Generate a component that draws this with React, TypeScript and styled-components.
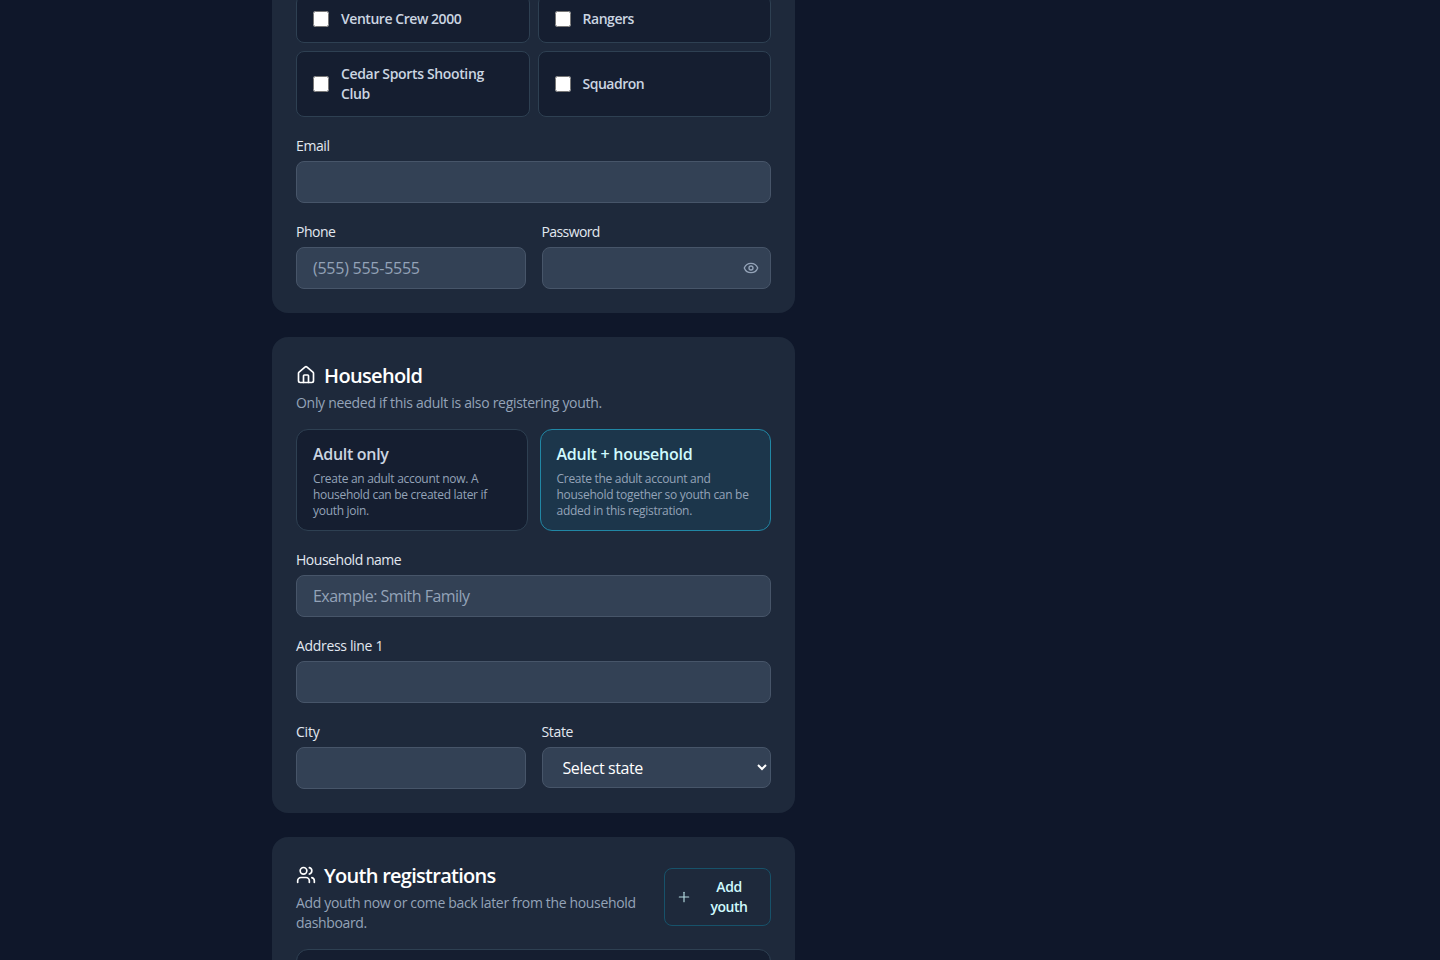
import React from "react";
import styled, { createGlobalStyle } from "styled-components";
import { Eye, House, Plus, Users } from "lucide-react";

const GlobalStyle = createGlobalStyle`
  *, *::before, *::after { box-sizing: border-box; }
  html, body { margin: 0; background: #0f172a; }
  body, input, select, button {
    font-family: "Segoe UI", "Open Sans", "Noto Sans", sans-serif;
  }
`;

const Page = styled.main`
  height: 960px;
  overflow: hidden;
  padding-left: 272px;
  background: #0f172a;
  color: #fff;
`;

const Column = styled.form`
  display: flex;
  flex-direction: column;
  gap: 24px;
  width: 523px;
  margin-top: -29px;
`;

const Card = styled.section`
  padding: 24px;
  border-radius: 16px;
  background: #1e293b;
`;

const Grid = styled.div<{ $gap: number }>`
  display: grid;
  grid-template-columns: repeat(2, minmax(0, 1fr));
  align-items: stretch;
  gap: ${(p) => p.$gap}px;
`;

const Text = styled.span<{ $track?: number }>`
  letter-spacing: ${(p) => p.$track ?? 0}px;
  white-space: pre-line;
`;

const UnitOption = styled.label`
  display: flex;
  align-items: center;
  gap: 12px;
  min-height: 48px;
  padding: 12px 16px;
  border: 1px solid #2e4052;
  border-radius: 8px;
  background: #151e30;
  color: #cbd5e1;
  font-size: 14px;
  font-weight: 600;
  line-height: 20px;
`;

const Checkbox = styled.input`
  flex: none;
  width: 16px;
  height: 16px;
  margin: 0;
`;

const FieldRoot = styled.div`
  margin-top: 19px;
`;

const Label = styled.label`
  display: block;
  margin-bottom: 5px;
  color: #e2e8f0;
  font-size: 14px;
  line-height: 20px;
`;

const InputShell = styled.div`
  display: flex;
  align-items: center;
  height: 42px;
  padding: 0 11px 0 16px;
  border: 1px solid #475569;
  border-radius: 8px;
  background: #334155;
`;

const Input = styled.input<{ $track?: number }>`
  flex: 1;
  min-width: 0;
  padding: 0;
  border: 0;
  outline: 0;
  background: transparent;
  color: #fff;
  font-size: 16px;
  line-height: 24px;
  letter-spacing: ${(p) => p.$track ?? 0}px;
  &::placeholder { color: #94a3b8; opacity: 1; }
`;

const Select = styled.select`
  display: block;
  width: 100%;
  height: 41px;
  padding: 1px 0 0 16px;
  border: 1px solid #475569;
  border-radius: 8px;
  background-color: #334155;
  color: #fff;
  font-size: 16px;
  letter-spacing: -0.4px;
`;

const Title = styled.h2`
  display: flex;
  align-items: center;
  gap: 8px;
  height: 28px;
  margin: 0;
  font-size: 20px;
  font-weight: 600;
  line-height: 28px;
  span { padding-top: 2px; }
`;

const Subtitle = styled.p`
  margin: 4px 0 0;
  color: #94a3b8;
  font-size: 14px;
  line-height: 20px;
`;

const Choices = styled(Grid)`
  margin-top: 16px;
`;

const Choice = styled.button<{ $active?: boolean }>`
  display: flex;
  flex-direction: column;
  gap: 5px;
  padding: 12px 16px 11px;
  border: 1px solid ${(p) => (p.$active ? "#2187a5" : "#2e4052")};
  border-radius: 12px;
  background: ${(p) => (p.$active ? "#1c364b" : "#151e30")};
  color: ${(p) => (p.$active ? "#cffafe" : "#cbd5e1")};
  text-align: left;
`;

const ChoiceTitle = styled(Text)`
  font-size: 16px;
  font-weight: 600;
  line-height: 24px;
`;

const ChoiceBody = styled(Text)`
  color: #94a3b8;
  font-size: 12px;
  line-height: 16px;
`;

const HeaderRow = styled.header`
  display: flex;
  align-items: center;
  justify-content: space-between;
`;

const AddButton = styled.button`
  display: flex;
  align-items: center;
  gap: 8px;
  width: 107px;
  padding: 8px 12px 8px 11px;
  border: 1px solid #17526a;
  border-radius: 8px;
  background: transparent;
  color: #cffafe;
  font-size: 14px;
  font-weight: 600;
  line-height: 20px;
  svg { flex: none; opacity: 0.85; }
  span { flex: 1; text-align: center; }
`;

const YouthPanel = styled.div`
  height: 120px;
  margin-top: 16px;
  border: 1px solid #2e4052;
  border-radius: 12px;
  background: #151e30;
`;

interface FieldProps {
  label: string;
  track?: number;
  children: React.ReactNode;
}

function Field({ label, track, children }: FieldProps) {
  return (
    <FieldRoot>
      <Label><Text $track={track}>{label}</Text></Label>
      {children}
    </FieldRoot>
  );
}

const units = [
  { name: "Venture Crew 2000", track: -0.45 },
  { name: "Rangers", track: -0.45 },
  { name: "Cedar Sports Shooting\nClub", track: -0.35 },
  { name: "Squadron", track: -0.5 },
];

export default function App() {
  return (
    <>
      <GlobalStyle />
      <Page>
        <Column>
          <Card>
            <Grid $gap={8}>
              {units.map((unit) => (
                <UnitOption key={unit.name}>
                  <Checkbox type="checkbox" />
                  <Text $track={unit.track}>{unit.name}</Text>
                </UnitOption>
              ))}
            </Grid>
            <Field label="Email" track={-0.4}>
              <InputShell><Input type="email" /></InputShell>
            </Field>
            <Grid $gap={16}>
              <Field label="Phone" track={-0.5}>
                <InputShell><Input placeholder="(555) 555-5555" $track={-0.25} /></InputShell>
              </Field>
              <Field label="Password" track={-0.6}>
                <InputShell>
                  <Input type="password" />
                  <Eye size={16} color="#94a3b8" />
                </InputShell>
              </Field>
            </Grid>
          </Card>

          <Card>
            <Title><House size={20} /><Text $track={-0.65}>Household</Text></Title>
            <Subtitle><Text $track={-0.3}>Only needed if this adult is also registering youth.</Text></Subtitle>
            <Choices $gap={12}>
              <Choice type="button">
                <ChoiceTitle $track={-0.3}>Adult only</ChoiceTitle>
                <ChoiceBody $track={-0.3}>{"Create an adult account now. A\nhousehold can be created later if\nyouth join."}</ChoiceBody>
              </Choice>
              <Choice type="button" $active>
                <ChoiceTitle $track={-0.27}>Adult + household</ChoiceTitle>
                <ChoiceBody $track={-0.29}>{"Create the adult account and\nhousehold together so youth can be\nadded in this registration."}</ChoiceBody>
              </Choice>
            </Choices>
            <Field label="Household name" track={-0.47}>
              <InputShell><Input placeholder="Example: Smith Family" $track={-0.52} /></InputShell>
            </Field>
            <Field label="Address line 1" track={-0.33}>
              <InputShell><Input /></InputShell>
            </Field>
            <Grid $gap={16}>
              <Field label="City" track={-0.2}>
                <InputShell><Input /></InputShell>
              </Field>
              <Field label="State" track={-0.35}>
                <Select><option>Select state</option></Select>
              </Field>
            </Grid>
          </Card>

          <Card>
            <HeaderRow>
              <div>
                <Title><Users size={20} /><Text $track={-0.73}>Youth registrations</Text></Title>
                <Subtitle><Text $track={-0.34}>{"Add youth now or come back later from the household\ndashboard."}</Text></Subtitle>
              </div>
              <AddButton type="button">
                <Plus size={16} strokeWidth={1.75} />
                <Text $track={-0.45}>{"Add\nyouth"}</Text>
              </AddButton>
            </HeaderRow>
            <YouthPanel />
          </Card>
        </Column>
      </Page>
    </>
  );
}
